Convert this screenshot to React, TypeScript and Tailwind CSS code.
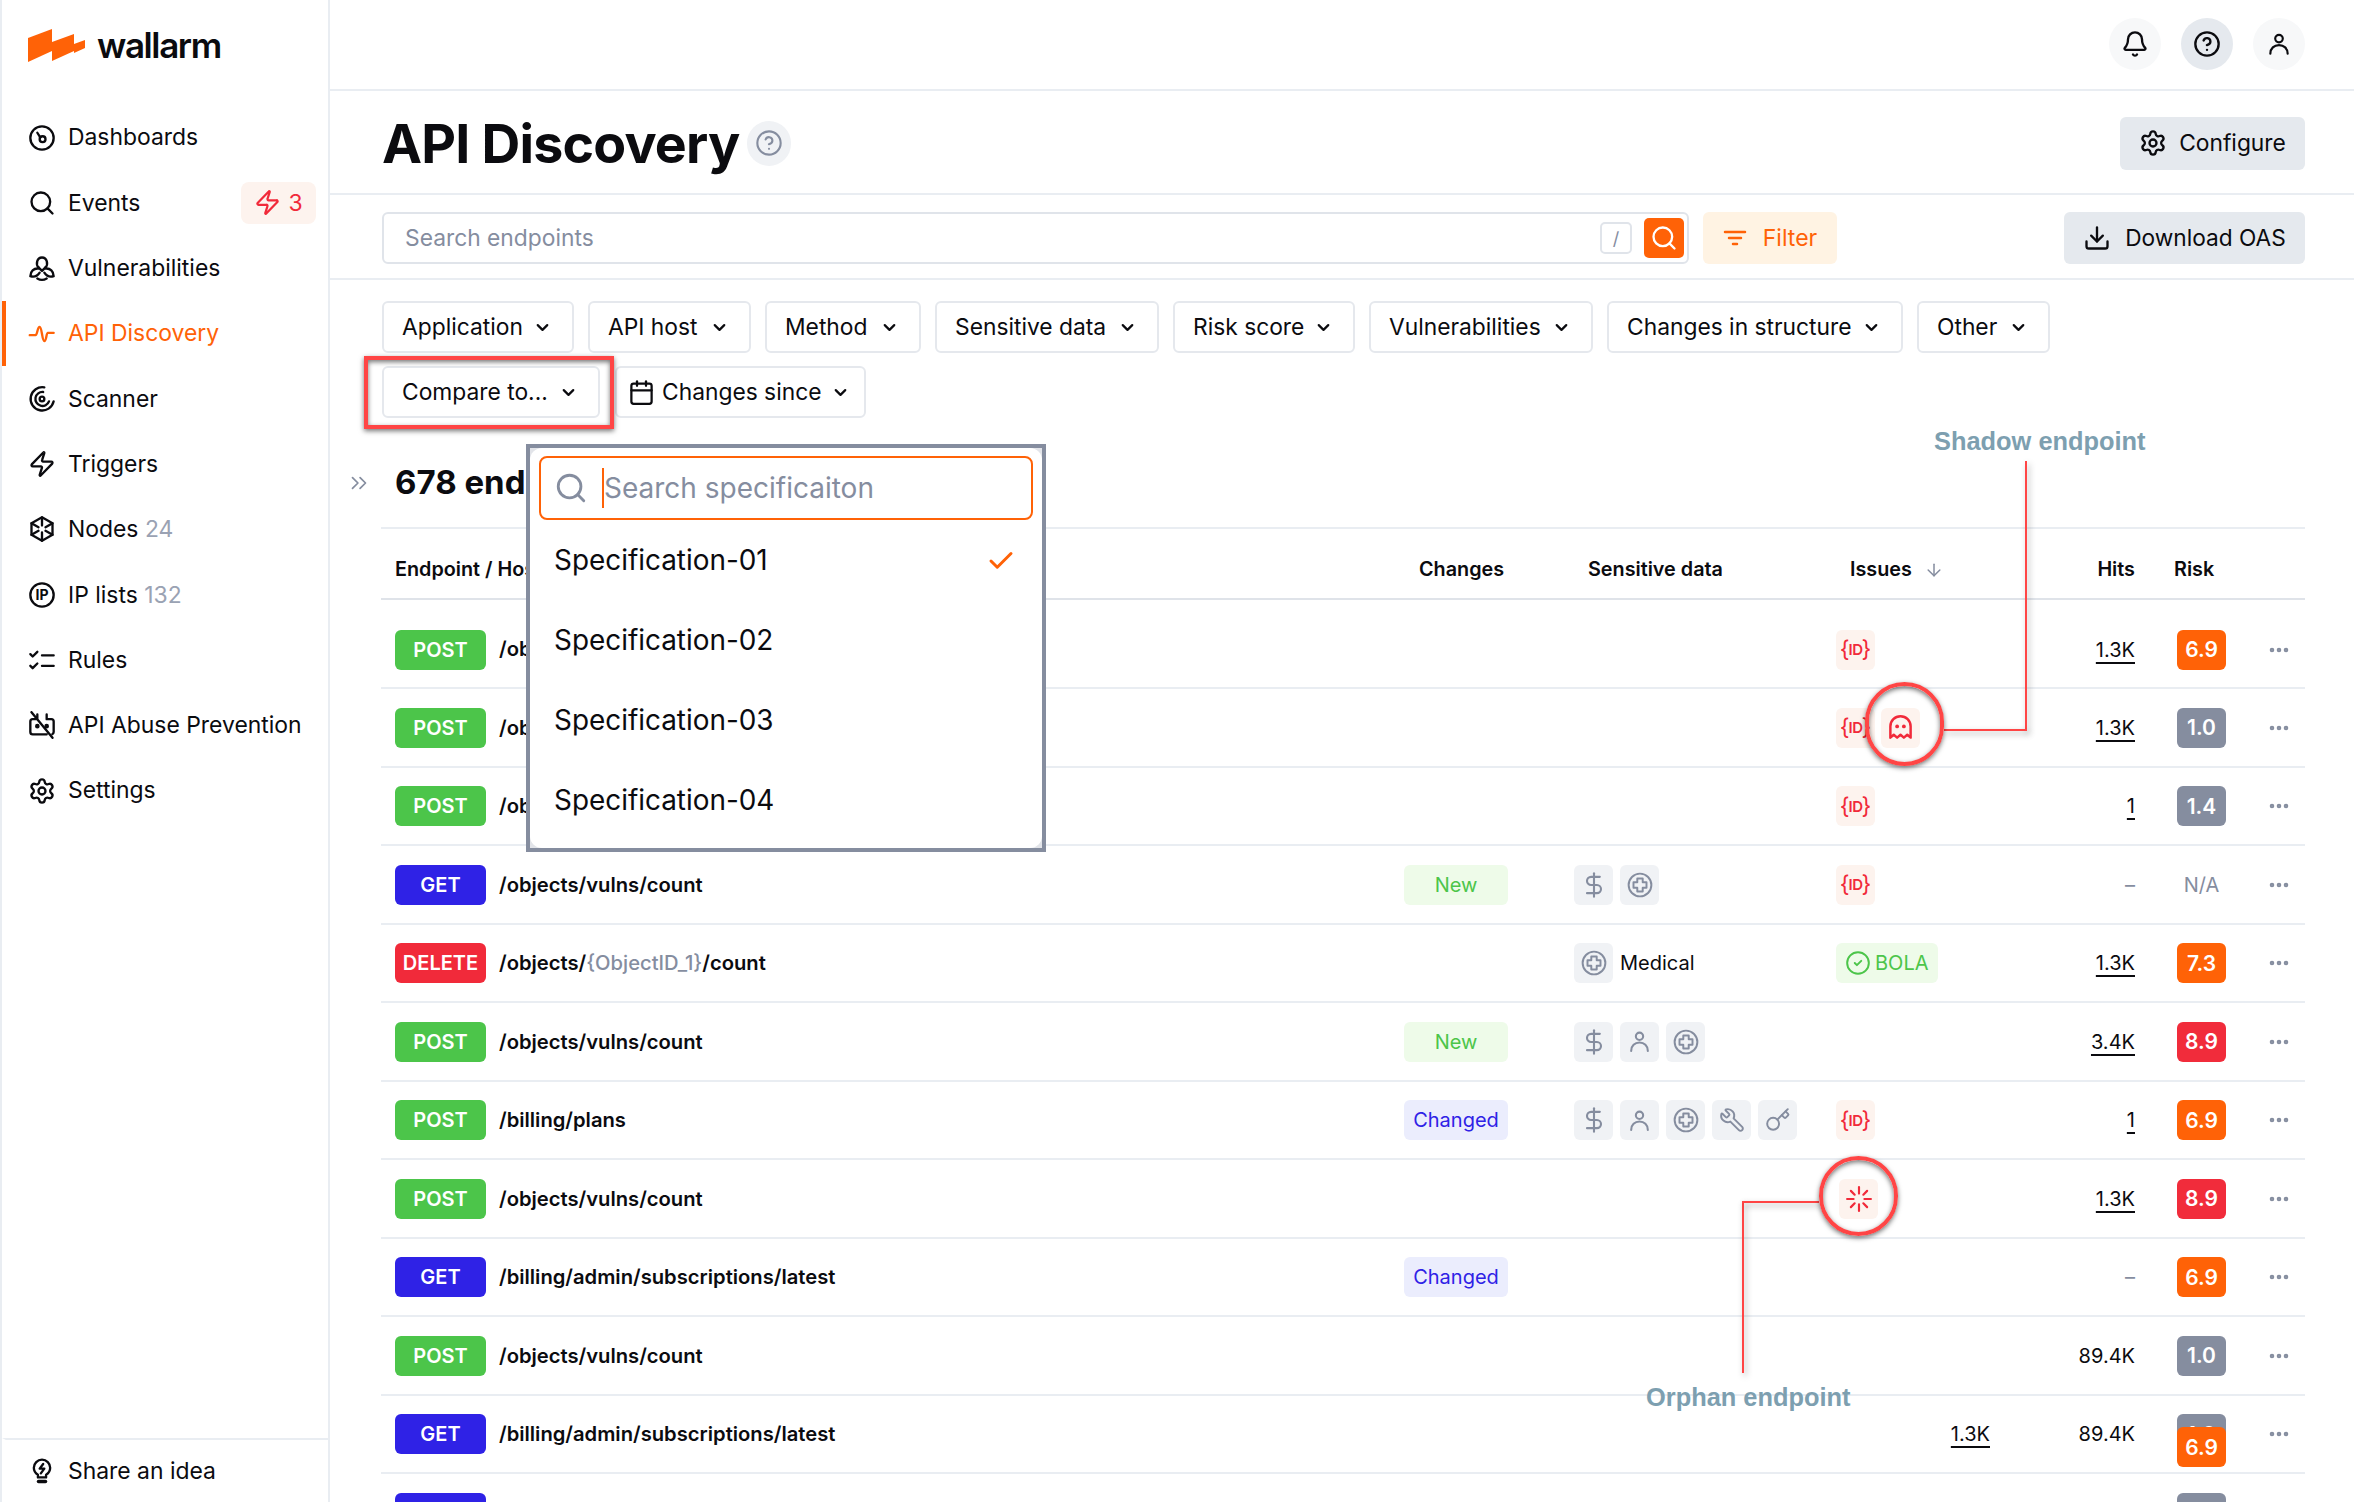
import {
  ArrowDown,
  Bell,
  Calendar,
  Check,
  ChevronDown,
  ChevronsRight,
  CircleCheck,
  CircleHelp,
  DollarSign,
  Download,
  Ellipsis,
  Key,
  Search,
  Settings,
  Wrench,
  Zap,
} from "lucide-react";
import type { ReactNode } from "react";

function Svg({ children, className }: { children: ReactNode; className?: string }) {
  return (
    <svg
      viewBox="0 0 24 24"
      fill="none"
      stroke="currentColor"
      strokeWidth="2"
      strokeLinecap="round"
      strokeLinejoin="round"
      className={className}
    >
      {children}
    </svg>
  );
}

const navIcon = "w-[28px] h-[28px] shrink-0";

const DashIcon = () => (
  <Svg className={navIcon}>
    <circle cx="12" cy="12" r="10" />
    <circle cx="12.5" cy="13" r="2.5" />
    <path d="M10.5 11.5 8 7.5" />
  </Svg>
);
const BioIcon = () => (
  <Svg className={navIcon}>
    <path d="M9 11.500C6.500 9 7.500 3 12 3s5.500 6 3 8.500" />
    <path d="M9 12.500C5 12 2 15 2 19c3 1 6 0 8-3" />
    <path d="M15 12.500c4-.500 7 2.500 7 6.500-3 1-6 0-8-3" />
    <path d="M8 21c2.500 1.500 5.500 1.500 8 0" />
    <path d="M9 11.500l3 3 3-3" />
  </Svg>
);
const PulseIcon = () => (
  <Svg className={navIcon}>
    <path d="M1.5 13h5c1.5 0 1.5-7 3.5-7s2 12 4 12 1.5-7 3-7h5" />
  </Svg>
);
const ScannerIcon = () => (
  <Svg className={navIcon}>
    <path d="M22 14a10 10 0 1 1-8-12" />
    <path d="M18 14a6 6 0 1 1-5-8" />
    <circle cx="12" cy="12" r="2" />
  </Svg>
);
const NodesIcon = () => (
  <Svg className={navIcon}>
    <path d="M12 2l9 5v10l-9 5-9-5V7z" />
    <path d="M12 2v7M12 15v7M3 7l6 3.500M15 13.500l6 3.500M21 7l-6 3.500M9 13.500 3 17" />
  </Svg>
);
const IpIcon = () => (
  <svg viewBox="0 0 24 24" className={navIcon}>
    <circle cx="12" cy="12" r="10" fill="none" stroke="currentColor" strokeWidth="2" />
    <text x="12" y="16.300" textAnchor="middle" fontSize="12" fontWeight="700" fill="currentColor">
      IP
    </text>
  </svg>
);
const RulesIcon = () => (
  <Svg className={navIcon}>
    <path d="M2 7l2 2 4-4M2 17l2 2 4-4M12 8h10M12 17h10" />
  </Svg>
);
const AbuseIcon = () => (
  <Svg className={navIcon}>
    <path d="M7 7H4a2 2 0 0 0-2 2v9a2 2 0 0 0 2 2h12M17 7h3a2 2 0 0 1 2 2v9a2 2 0 0 1-1 1.700M8 7V3M16 7V3M3 1l18 22" />
    <circle cx="16" cy="13" r="1" fill="currentColor" />
    <circle cx="8" cy="13" r="1" fill="currentColor" />
  </Svg>
);
const IdeaIcon = () => (
  <Svg className={navIcon}>
    <path d="M8.500 17.500v-2.200C6.400 14 5 11.800 5 9.300a7 7 0 0 1 14 0c0 2.500-1.400 4.700-3.500 6v2.200z" />
    <path d="M9 21h6" strokeWidth="3" />
    <path d="M13 6l-3 4h4l-3 4" />
  </Svg>
);
const FunnelIcon = () => (
  <Svg className="w-[24px] h-[24px]">
    <path d="M2 6h20M6 12h12M10 18h4" strokeWidth="2.500" />
  </Svg>
);
const PersonIcon = ({ className, color }: { className: string; color?: string }) => (
  <svg viewBox="0 0 24 24" fill="none" stroke={color ?? "currentColor"} strokeWidth="2" strokeLinecap="round" className={className}>
    <circle cx="12" cy="7" r="3.500" />
    <path d="M4 21c0-5 3.500-8 8-8s8 3 8 8" />
  </svg>
);
const MedicalIcon = () => (
  <svg viewBox="0 0 24 24" fill="none" stroke="#858d9f" strokeWidth="1.800" className="w-[26px] h-[26px]">
    <circle cx="12" cy="12" r="10.500" />
    <path d="M9.500 6h5v3.500H18v5h-3.500V18h-5v-3.500H6v-5h3.500z" strokeLinejoin="round" />
  </svg>
);
const GhostIcon = () => (
  <svg viewBox="0 0 24 24" fill="none" stroke="#f12a3a" strokeWidth="2.200" strokeLinejoin="round" className="w-[27px] h-[27px]">
    <path d="M3 21V11a9 9 0 0 1 18 0v10l-3-2.500-3 2.500-3-2.500L9 21l-3-2.500z" />
    <circle cx="9" cy="11" r="1.700" fill="#f12a3a" stroke="none" />
    <circle cx="15" cy="11" r="1.700" fill="#f12a3a" stroke="none" />
  </svg>
);
const SpinnerIcon = () => (
  <svg viewBox="0 0 24 24" fill="none" stroke="#f12a3a" strokeWidth="2" strokeLinecap="round" className="w-[26px] h-[26px]">
    <path d="M12 1v6M12 17v6M1 12h6M17 12h6M4.500 4.500l3.500 3.500M16 16l3.500 3.500M19.500 4.500 16 8M8 16l-3.500 3.500" />
  </svg>
);

const Dollar = () => <DollarSign size={28} strokeWidth={1.8} color="#858d9f" />;
const Person = () => <PersonIcon className="w-[25px] h-[25px]" color="#858d9f" />;
const Tool = () => <Wrench size={26} strokeWidth={1.8} color="#858d9f" className="-scale-x-100" />;
const KeyIc = () => <Key size={26} strokeWidth={1.8} color="#858d9f" />;

const nav: { label: string; icon: ReactNode; count?: string; active?: boolean; badge?: boolean }[] = [
  { label: "Dashboards", icon: <DashIcon /> },
  { label: "Events", icon: <Search className={navIcon} strokeWidth={2} />, badge: true },
  { label: "Vulnerabilities", icon: <BioIcon /> },
  { label: "API Discovery", icon: <PulseIcon />, active: true },
  { label: "Scanner", icon: <ScannerIcon /> },
  { label: "Triggers", icon: <Zap className={navIcon} strokeWidth={2} /> },
  { label: "Nodes", icon: <NodesIcon />, count: "24" },
  { label: "IP lists", icon: <IpIcon />, count: "132" },
  { label: "Rules", icon: <RulesIcon /> },
  { label: "API Abuse Prevention", icon: <AbuseIcon /> },
  { label: "Settings", icon: <Settings className={navIcon} strokeWidth={2} /> },
];

const filters = [
  { label: "Application", width: "w-[192px]" },
  { label: "API host", width: "w-[163px]" },
  { label: "Method", width: "w-[156px]" },
  { label: "Sensitive data", width: "w-[224px]" },
  { label: "Risk score", width: "w-[182px]" },
  { label: "Vulnerabilities", width: "w-[224px]" },
  { label: "Changes in structure", width: "w-[296px]" },
  { label: "Other", width: "w-[133px]" },
];

type Row = {
  method: "POST" | "GET" | "DELETE";
  path: ReactNode;
  change?: "New" | "Changed";
  data?: ReactNode[];
  medical?: boolean;
  issues?: ReactNode;
  extraHits?: string;
  hits?: string;
  plainHits?: boolean;
  risk: string;
  overlay?: boolean;
};

const vulns = "/objects/vulns/count";
const latest = "/billing/admin/subscriptions/latest";

const IdIssue = () => (
  <IssueBox>
    <span className="text-[#f12a3a] flex items-center leading-none">
      <span className="text-[23px] font-normal">{"{"}</span>
      <span className="text-[15px] font-semibold tracking-[-0.5px] -mx-[1px]">ID</span>
      <span className="text-[23px] font-normal">{"}"}</span>
    </span>
  </IssueBox>
);

const rows: Row[] = [
  { method: "POST", path: vulns, issues: <IdIssue />, hits: "1.3K", risk: "6.9" },
  {
    method: "POST",
    path: vulns,
    issues: (
      <>
        <IdIssue />
        <IssueBox>
          <GhostIcon />
        </IssueBox>
      </>
    ),
    hits: "1.3K",
    risk: "1.0",
  },
  { method: "POST", path: vulns, issues: <IdIssue />, hits: "1", risk: "1.4" },
  {
    method: "GET",
    path: vulns,
    change: "New",
    data: [<Dollar />, <MedicalIcon />],
    issues: <IdIssue />,
    hits: "–",
    risk: "N/A",
  },
  {
    method: "DELETE",
    path: (
      <>
        /objects/<span className="text-[#858d9f] font-medium">{"{ObjectID_1}"}</span>/count
      </>
    ),
    data: [<MedicalIcon />],
    medical: true,
    issues: (
      <span className="h-[40px] px-[9px] rounded-[6px] bg-[#eefbe9] text-[#4cc54a] text-[20px] flex items-center gap-[4px]">
        <CircleCheck size={26} strokeWidth={1.8} />
        BOLA
      </span>
    ),
    hits: "1.3K",
    risk: "7.3",
  },
  {
    method: "POST",
    path: vulns,
    change: "New",
    data: [<Dollar />, <Person />, <MedicalIcon />],
    hits: "3.4K",
    risk: "8.9",
  },
  {
    method: "POST",
    path: "/billing/plans",
    change: "Changed",
    data: [<Dollar />, <Person />, <MedicalIcon />, <Tool />, <KeyIc />],
    issues: <IdIssue />,
    hits: "1",
    risk: "6.9",
  },
  {
    method: "POST",
    path: vulns,
    issues: (
      <span className="ml-[3px]">
        <IssueBox>
          <SpinnerIcon />
        </IssueBox>
      </span>
    ),
    hits: "1.3K",
    risk: "8.9",
  },
  { method: "GET", path: latest, change: "Changed", hits: "–", risk: "6.9" },
  { method: "POST", path: vulns, hits: "89.4K", plainHits: true, risk: "1.0" },
  { method: "GET", path: latest, extraHits: "1.3K", hits: "89.4K", plainHits: true, risk: "1.0", overlay: true },
  { method: "GET", path: latest, risk: "1.0" },
];

function IssueBox({ children }: { children: ReactNode }) {
  return (
    <span className="w-[39px] h-[40px] rounded-[6px] bg-[#fdf3ee] flex items-center justify-center">{children}</span>
  );
}

function riskColor(risk: string) {
  if (risk === "6.9" || risk === "7.3") return "bg-[#ff6207]";
  if (risk === "8.9") return "bg-[#f12c3b]";
  return "bg-[#858d9f]";
}

const methodColor = {
  POST: "bg-[#4cc54a]",
  GET: "bg-[#2f22e6]",
  DELETE: "bg-[#f12a3a]",
};

function TableRow({ row, first }: { row: Row; first: boolean }) {
  return (
    <div
      className={`grid grid-cols-[1023px_170px_262px_154px_145px_134px_36px] items-center border-b-2 border-[#e9edf2] ${
        first ? "h-[89px] pt-[12px]" : "h-[78.500px] pt-[1px]"
      }`}
    >
      <div className="flex items-center pl-[14px]">
        <span
          className={`w-[91px] h-[40px] rounded-[6px] flex items-center justify-center text-white text-[20px] font-semibold ${methodColor[row.method]}`}
        >
          {row.method}
        </span>
        <span className="ml-[13px] text-[20.200px] font-semibold text-[#0b0b0f]">{row.path}</span>
      </div>
      <div>
        {row.change && (
          <span
            className={`w-[104px] h-[40px] rounded-[6px] flex items-center justify-center text-[20px] ${
              row.change === "New" ? "bg-[#eefbe9] text-[#4cc54a]" : "bg-[#ebedfd] text-[#2f22e6]"
            }`}
          >
            {row.change}
          </span>
        )}
      </div>
      <div className="flex items-center gap-[7px]">
        {row.data?.map((icon, i) => (
          <span key={i} className="w-[39px] h-[40px] rounded-[6px] bg-[#f0f2f5] flex items-center justify-center">
            {icon}
          </span>
        ))}
        {row.medical && <span className="text-[20px] text-[#0b0b0f]">Medical</span>}
      </div>
      <div className="flex items-center gap-[6px] relative">
        {row.issues}
        {row.extraHits && (
          <span className="ml-auto text-[20px] underline underline-offset-[5px] text-[#0b0b0f]">{row.extraHits}</span>
        )}
      </div>
      <div
        className={`text-right text-[20px] ${row.hits === "–" ? "text-[#858d9f]" : "text-[#0b0b0f]"} ${
          row.plainHits || row.hits === "–" ? "" : "underline underline-offset-[5px]"
        }`}
      >
        {row.hits}
      </div>
      <div className="pl-[42px] relative">
        {row.risk === "N/A" ? (
          <span className="w-[49px] flex justify-center text-[20px] text-[#858d9f]">N/A</span>
        ) : (
          <span
            className={`w-[49px] h-[40px] rounded-[6px] flex items-center justify-center text-white text-[21px] font-semibold ${riskColor(row.risk)}`}
          >
            {row.risk}
          </span>
        )}
        {row.overlay && (
          <span className="absolute left-[42px] top-[13px] w-[49px] h-[40px] rounded-[6px] flex items-center justify-center text-white text-[21px] font-semibold bg-[#ff6207]">
            6.9
          </span>
        )}
      </div>
      <div className="-ml-[2px]">
        <Ellipsis size={24} strokeWidth={2.600} color="#858d9f" />
      </div>
    </div>
  );
}

function FilterButton({ label, icon, className }: { label: string; icon?: ReactNode; className?: string }) {
  return (
    <button
      className={`h-[52px] pl-[18px] border-2 border-[#e5e8ed] rounded-[6px] flex items-center text-[22.800px] text-[#0b0b0f] bg-white ${className ?? "pr-[20px]"}`}
    >
      {icon}
      {label}
      <ChevronDown size={19} strokeWidth={2.800} className="ml-auto" />
    </button>
  );
}

export default function App() {
  return (
    <div className="relative w-[2354px] h-[1502px] overflow-hidden bg-white flex font-['Inter',sans-serif] text-[#0b0b0f]">
      {/* Sidebar */}
      <aside className="w-[330px] shrink-0 border-l-2 border-r-2 border-[#e9edf2] flex flex-col">
        <div className="h-[91px] pl-[26px] flex items-center gap-[11px] pb-[1px]">
          <svg viewBox="0 0 58 33" className="w-[58px] h-[33px]" fill="#ff6207">
            <path d="M0 9 24 0v22L0 33z" />
            <path d="M24 13 46 5v17l-22 10z" />
            <path d="M46 15l11-4v8l-11 5z" />
          </svg>
          <span className="text-[35px] font-semibold tracking-[-1.400px] text-[#0b0b0f] leading-none">wallarm</span>
        </div>
        <nav className="flex flex-col pt-[14px]">
          {nav.map((item) => (
            <div
              key={item.label}
              className={`h-[65.300px] pl-[22px] pr-[12px] flex items-center gap-[12px] text-[22.900px] border-l-[4px] ${
                item.active ? "border-[#ff6207] text-[#ff6207]" : "border-transparent"
              }`}
            >
              {item.icon}
              <span>
                {item.label}
                {item.count && <span className="text-[#9aa2b3]"> {item.count}</span>}
              </span>
              {item.badge && (
                <span className="ml-auto w-[75px] h-[42px] rounded-[8px] bg-[#fdf3ee] text-[#f12a3a] flex items-center justify-center gap-[7px]">
                  <Zap size={27} strokeWidth={2} />3
                </span>
              )}
            </div>
          ))}
        </nav>
        <div className="mt-auto h-[64px] border-t-2 border-[#e9edf2] pl-[22px] flex items-center gap-[12px] text-[22.900px] border-l-[4px] border-l-transparent">
          <IdeaIcon />
          Share an idea
        </div>
      </aside>

      {/* Main */}
      <main className="flex-1 min-w-0 flex flex-col">
        <header className="h-[91px] shrink-0 border-b-2 border-[#e9edf2] flex items-center justify-end gap-[20px] pr-[49px] pb-[1px]">
          <span className="w-[52px] h-[52px] rounded-full bg-[#f7f8f9] flex items-center justify-center">
            <Bell size={28} strokeWidth={2} />
          </span>
          <span className="w-[52px] h-[52px] rounded-full bg-[#e5e9ee] flex items-center justify-center">
            <CircleHelp size={28} strokeWidth={2} />
          </span>
          <span className="w-[52px] h-[52px] rounded-full bg-[#f7f8f9] flex items-center justify-center">
            <PersonIcon className="w-[26px] h-[26px]" />
          </span>
        </header>

        <div className="h-[104px] shrink-0 border-b-2 border-[#e9edf2] pl-[52px] pr-[49px] pt-[2px] flex items-center">
          <h1 className="mt-[2px] text-[53.700px] font-bold tracking-[-0.800px] leading-none">API Discovery</h1>
          <span className="ml-[8px] w-[44px] h-[45px] rounded-full bg-[#f0f2f5] flex items-center justify-center">
            <CircleHelp size={28} strokeWidth={1.800} color="#858d9f" />
          </span>
          <button className="ml-auto w-[185px] h-[53px] rounded-[6px] bg-[#e5e9ee] flex items-center justify-center gap-[12px] text-[22.800px]">
            <Settings size={28} strokeWidth={2} />
            Configure
          </button>
        </div>

        <div className="h-[85px] shrink-0 border-b-2 border-[#e9edf2] pl-[52px] pr-[49px] pt-[3px] flex items-center gap-[14px]">
          <div className="w-[1307px] h-[52px] border-2 border-[#e0e4ea] rounded-[6px] flex items-center pl-[21px] pr-[3px]">
            <span className="text-[22.800px] text-[#858d9f]">Search endpoints</span>
            <span className="ml-auto w-[32px] h-[32px] rounded-[5px] border-2 border-[#e0e4ea] text-[#858d9f] text-[18px] flex items-center justify-center">
              /
            </span>
            <span className="ml-[12px] w-[40px] h-[40px] rounded-[5px] bg-[#ff6207] flex items-center justify-center">
              <Search size={28} strokeWidth={2} color="white" />
            </span>
          </div>
          <button className="w-[134px] h-[52px] rounded-[6px] bg-[#fff3e3] text-[#ff6207] flex items-center justify-center gap-[16px] text-[23px]">
            <FunnelIcon />
            Filter
          </button>
          <button className="ml-auto w-[241px] h-[52px] rounded-[6px] bg-[#e5e9ee] flex items-center justify-center gap-[14px] text-[22.700px]">
            <Download size={28} strokeWidth={2} />
            Download OAS
          </button>
        </div>

        <div className="shrink-0 pl-[52px] pr-[49px] pt-[21px] flex flex-wrap gap-x-[14px] gap-y-[13px] w-[1800px]">
          {filters.map((f) => (
            <FilterButton key={f.label} label={f.label} className={`pr-[20px] ${f.width}`} />
          ))}
          <FilterButton label="Compare to..." className="pr-[20px] w-[218px]" />
          <FilterButton
            label="Changes since"
            className="pr-[14px] w-[251px] ml-[1px]"
            icon={<Calendar size={27} strokeWidth={2} className="mr-[7px] -ml-[7px]" />}
          />
        </div>

        <div className="pl-[51px] pr-[49px] flex-1 min-h-0">
          <div className="h-[111px] border-b-2 border-[#e9edf2] flex items-center pt-[20px]">
            <ChevronsRight size={26} strokeWidth={1.600} color="#858d9f" className="-ml-[35px]" />
            <span className="ml-[23px] text-[33px] font-bold">678 endpoints</span>
          </div>
          <div className="grid grid-cols-[1023px_170px_262px_154px_145px_134px_36px] h-[71px] pt-[12px] items-center border-b-2 border-[#dfe3e9] text-[19.800px] font-semibold">
            <span className="pl-[14px]">Endpoint / Host</span>
            <span className="pl-[15px]">Changes</span>
            <span className="pl-[14px]">Sensitive data</span>
            <span className="pl-[14px] flex items-center gap-[12px]">
              Issues
              <ArrowDown size={20} strokeWidth={1.800} color="#858d9f" />
            </span>
            <span className="text-right">Hits</span>
            <span className="pl-[39px]">Risk</span>
            <span />
          </div>
          {rows.map((row, i) => (
            <TableRow key={i} row={row} first={i === 0} />
          ))}
        </div>
      </main>

      {/* Compare-to dropdown */}
      <div className="absolute left-[526px] top-[444px] w-[520px] h-[408px] border-[4px] border-[#858d9f] bg-[#e2e4e9]">
        <div className="w-full h-full bg-white rounded-[12px] pt-[8px] px-[9px]">
          <div className="h-[64px] border-2 border-[#ff6207] rounded-[8px] flex items-center pl-[13px] text-[28px] text-[#858d9f]">
            <Search size={34} strokeWidth={2} className="mr-[14px]" />
            <span className="border-l-2 border-[#ff6207] leading-[40px]">Search specificaiton</span>
          </div>
          <ul className="pt-[1px] text-[27.900px] text-[#0b0b0f]">
            {["Specification-01", "Specification-02", "Specification-03", "Specification-04"].map((s, i) => (
              <li key={s} className="h-[80px] pl-[15px] pr-[17px] flex items-center">
                {s}
                {i === 0 && <Check size={30} strokeWidth={2.400} color="#ff6207" className="ml-auto" />}
              </li>
            ))}
          </ul>
        </div>
      </div>

      {/* Screenshot annotations */}
      <div className="absolute left-[364px] top-[356px] w-[250px] h-[73px] border-[4px] border-[#ff4545] shadow-[0_2px_5px_rgba(0,0,0,0.55),inset_0_2px_5px_rgba(0,0,0,0.55)]" />

      <span className="absolute left-[1934px] top-[422px] text-[25.400px] font-bold text-[#7d9fb0] font-['Liberation_Sans',sans-serif]">
        Shadow endpoint
      </span>
      <div className="absolute left-[2025px] top-[461px] w-[2px] h-[270px] bg-[#ff4545] shadow-[2px_3px_6px_rgba(0,0,0,0.35)]" />
      <div className="absolute left-[1944px] top-[729px] w-[83px] h-[2px] bg-[#ff4545] shadow-[2px_3px_6px_rgba(0,0,0,0.35)]" />
      <div className="absolute left-[1865px] top-[682px] w-[79px] h-[84px] rounded-full border-[4px] border-[#ff4545] shadow-[0_2px_5px_rgba(0,0,0,0.55),inset_0_2px_5px_rgba(0,0,0,0.55)]" />

      <span className="absolute left-[1646px] top-[1378px] text-[25.400px] font-bold text-[#7d9fb0] font-['Liberation_Sans',sans-serif]">
        Orphan endpoint
      </span>
      <div className="absolute left-[1742px] top-[1201px] w-[2px] h-[172px] bg-[#ff4545] shadow-[2px_3px_6px_rgba(0,0,0,0.35)]" />
      <div className="absolute left-[1742px] top-[1201px] w-[77px] h-[2px] bg-[#ff4545] shadow-[2px_3px_6px_rgba(0,0,0,0.35)]" />
      <div className="absolute left-[1819px] top-[1156px] w-[79px] h-[80px] rounded-full border-[4px] border-[#ff4545] shadow-[0_2px_5px_rgba(0,0,0,0.55),inset_0_2px_5px_rgba(0,0,0,0.55)]" />
    </div>
  );
}
